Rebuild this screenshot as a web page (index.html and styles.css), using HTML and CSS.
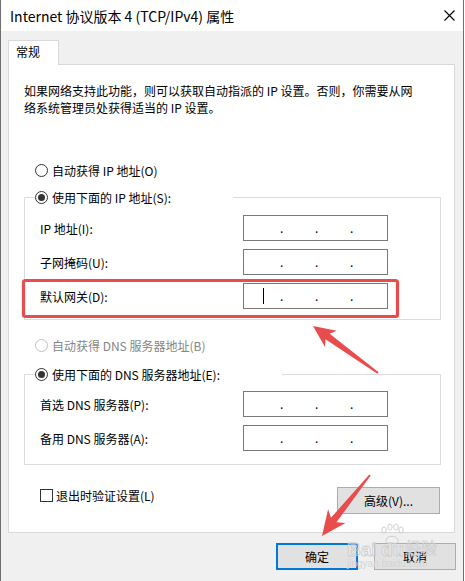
FILE: index.html
```html
<!DOCTYPE html>
<html lang="zh-CN">

<head>
    <meta charset="UTF-8">
    <meta name="viewport" content="width=device-width, initial-scale=1.0">
    <title>Internet 协议版本 4 (TCP/IPv4) 属性</title>
    <link rel="stylesheet" href="styles.css">
</head>

<body>
    <div class="window">
        <div class="titlebar">
            <span class="title">Internet 协议版本 4 (TCP/IPv4) 属性</span>
            <svg class="close" width="11" height="11" viewBox="0 0 11 11">
                <path d="M0.5 0.5L10.5 10.5M10.5 0.5L0.5 10.5" stroke="#000" stroke-width="1.1" fill="none" />
            </svg>
        </div>
        <div class="content">
            <div class="tab">常规</div>
            <div class="panel">
                <p class="intro">如果网络支持此功能，则可以获取自动指派的 IP 设置。否则，你需要从网<br>络系统管理员处获得适当的 IP 设置。</p>

                <div class="radio-row auto-ip"><span class="radio"></span>自动获得 IP 地址(O)</div>

                <fieldset class="group ip-group">
                    <legend><span class="legend-in"><span class="radio checked"></span>使用下面的 IP 地址(S):</span></legend>
                    <div class="field">
                        <span>IP 地址(I):</span>
                        <div class="ip"><span class="oct"></span><span class="dot">.</span><span class="dot">.</span><span class="dot">.</span></div>
                    </div>
                    <div class="field">
                        <span>子网掩码(U):</span>
                        <div class="ip"><span class="oct"></span><span class="dot">.</span><span class="dot">.</span><span class="dot">.</span></div>
                    </div>
                    <div class="field">
                        <span>默认网关(D):</span>
                        <div class="ip"><span class="oct"><i class="caret"></i></span><span class="dot">.</span><span class="dot">.</span><span class="dot">.</span></div>
                    </div>
                </fieldset>

                <div class="radio-row auto-dns disabled"><span class="radio"></span>自动获得 DNS 服务器地址(B)</div>

                <fieldset class="group dns-group">
                    <legend><span class="legend-in"><span class="radio checked"></span>使用下面的 DNS 服务器地址(E):</span></legend>
                    <div class="field">
                        <span>首选 DNS 服务器(P):</span>
                        <div class="ip"><span class="oct"></span><span class="dot">.</span><span class="dot">.</span><span class="dot">.</span></div>
                    </div>
                    <div class="field">
                        <span>备用 DNS 服务器(A):</span>
                        <div class="ip"><span class="oct"></span><span class="dot">.</span><span class="dot">.</span><span class="dot">.</span></div>
                    </div>
                </fieldset>

                <div class="bottom-row">
                    <div class="check-row"><span class="checkbox"></span>退出时验证设置(L)</div>
                    <button class="btn advanced">高级(V)...</button>
                </div>
            </div>
            <div class="footer">
                <button class="btn primary">确定</button>
                <button class="btn">取消</button>
            </div>
        </div>

        <!-- annotations drawn on top of the screenshot -->
        <svg class="annot" width="465" height="581" viewBox="0 0 465 581">
            <rect x="23.5" y="280.5" width="374" height="36" rx="2" fill="none" stroke="#e84c4c" stroke-width="3.2" />
            <polygon fill="#e84c4c" points="313,326 336.7,330.8 329.7,333.7 378.6,372.3 377.4,373.7 325.5,339.3 325,347" />
            <polygon fill="#e84c4c" points="322,536 345.5,522.9 336.5,522.2 370.7,475.6 369.3,474.4 331,517.8 328.1,509.3" />
            <g class="watermark">
                <text x="347" y="556" class="wm-big">Bai</text>
                <g class="paw" fill="none" stroke="#cfcfcf" stroke-width="1">
                    <ellipse cx="384" cy="530" rx="2.2" ry="3" />
                    <ellipse cx="390" cy="527" rx="2.2" ry="3" />
                    <ellipse cx="396" cy="527" rx="2.2" ry="3" />
                    <ellipse cx="401" cy="530" rx="2.2" ry="3" />
                    <path d="M386 540c1-5 11-5 12 0c1 3-2 4-6 3c-4 1-7 0-6-3z" />
                </g>
                <text x="381" y="556" class="wm-big">du</text>
                <text x="405" y="554" class="wm-cn">经验</text>
                <text x="347" y="567" class="wm-small">jingyan.baidu.com</text>
            </g>
        </svg>
    </div>
</body>

</html>
```

FILE: styles.css
```css
* {
    box-sizing: border-box;
}

body {
    margin: 0;
    background: #fff;
    color: #000;
    font: 12px "Microsoft YaHei UI", "Noto Sans CJK SC", sans-serif;
}

.window {
    position: relative;
    width: 464px;
    border: 1px solid #6f6f6f;
    border-top: 0;
    background: #f0f0f0;
}

.titlebar {
    height: 31px;
    padding: 0 8px 0 9px;
    background: #fff;
    display: flex;
    align-items: center;
    justify-content: space-between;
}

.title {
    font-size: 14px;
}

.close {
    display: block;
}

.content {
    padding: 9px 8px 11px 7px;
}

.tab {
    position: relative;
    z-index: 1;
    width: 51px;
    height: 25px;
    margin-bottom: -1px;
    padding-left: 7px;
    border: 1px solid #d9d9d9;
    border-bottom: 0;
    background: #fff;
    line-height: 22px;
}

.panel {
    background: #fff;
    border: 1px solid #d9d9d9;
    padding: 17px 13px 18px 15px;
}

.intro {
    margin: 0;
    line-height: 17px;
}

.radio-row {
    display: flex;
    align-items: center;
    gap: 4px;
    height: 17px;
    padding-left: 11px;
}

.auto-ip {
    margin-top: 46px;
}

.auto-dns {
    margin-top: 17px;
}

.disabled {
    color: #858585;
}

.radio {
    flex: none;
    width: 13px;
    height: 13px;
    border: 1px solid #333;
    border-radius: 50%;
    background: #fff;
    display: inline-flex;
    align-items: center;
    justify-content: center;
}

.disabled .radio {
    border-color: #c0c0c0;
}

.radio.checked::after {
    content: "";
    width: 7px;
    height: 7px;
    border-radius: 50%;
    background: #333;
}

.group {
    margin: 10px 0 0;
    padding: 9px 52px 10px 10px;
    border: 1px solid #dcdcdc;
    min-width: 0;
}

.dns-group {
    margin-top: 12px;
    padding-top: 8px;
    padding-bottom: 13px;
}

legend {
    padding: 0 62px 0 0;
}

.legend-in {
    display: flex;
    align-items: center;
    gap: 4px;
    height: 17px;
}

.field {
    display: flex;
    align-items: center;
    justify-content: space-between;
    height: 26px;
    padding-left: 5px;
}

.field + .field {
    margin-top: 8px;
}

.ip {
    width: 145px;
    height: 26px;
    border: 1px solid #7a7a7a;
    background: #fff;
    display: flex;
    align-items: center;
}

.oct {
    flex: none;
    width: 36px;
    height: 16px;
}

.dot {
    flex: none;
    width: 35px;
    line-height: 16px;
}

.caret {
    display: block;
    width: 1px;
    height: 16px;
    margin-left: 19px;
    background: #000;
}

.bottom-row {
    display: flex;
    justify-content: space-between;
    align-items: flex-start;
    margin-top: 22px;
}

.check-row {
    display: flex;
    align-items: center;
    gap: 3px;
    height: 17px;
    padding-left: 16px;
}

.checkbox {
    flex: none;
    width: 13px;
    height: 13px;
    border: 1px solid #333;
    background: #fff;
}

.btn {
    width: 82px;
    height: 27px;
    padding: 0;
    border: 1px solid #adadad;
    background: #e1e1e1;
    color: #000;
    font: inherit;
}

.btn.advanced {
    width: 103px;
    margin-right: 1px;
}

.btn.primary {
    border: 2px solid #0078d7;
}

.footer {
    display: flex;
    justify-content: flex-end;
    gap: 16px;
    margin: 10px -1px 0 0;
}

.annot {
    position: absolute;
    top: 0;
    left: -1px;
    pointer-events: none;
}

.wm-big {
    font: bold 19px "Liberation Sans", sans-serif;
    fill: rgba(255, 255, 255, 0.25);
    stroke: #cdcdcd;
    stroke-width: 0.8;
}

.wm-cn {
    font: 16px "Noto Sans CJK SC", sans-serif;
    fill: rgba(255, 255, 255, 0.25);
    stroke: #cdcdcd;
    stroke-width: 0.6;
}

.wm-small {
    font: 10px "Liberation Sans", sans-serif;
    fill: #d4d4d4;
}
```
